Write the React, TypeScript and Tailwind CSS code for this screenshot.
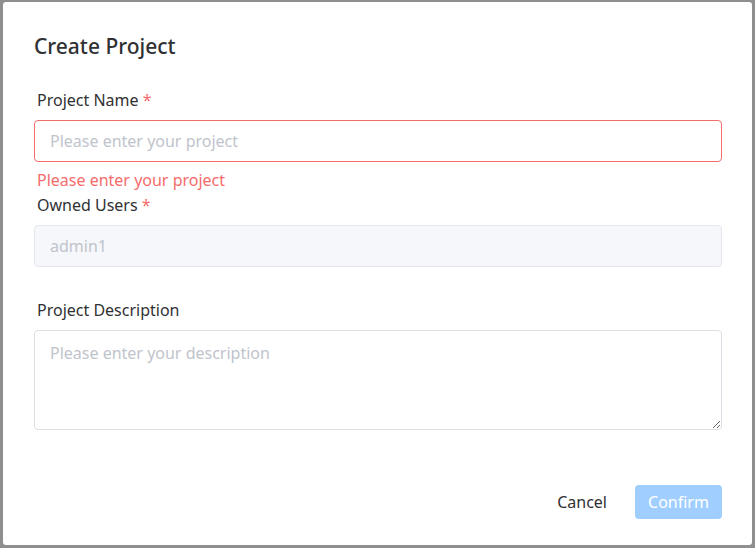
export default function App() {
  return (
    <div className="h-[548px] w-[755px] overflow-hidden bg-[#8f8f8f] pb-[3px] pl-[3px] pr-[3px] pt-[2px]">
      <div
        className="flex h-full w-full flex-col rounded-[3px] bg-white pl-[31px] pr-[30px] pt-[30px]"
        style={{ fontFamily: '"Noto Sans", "Open Sans", sans-serif' }}
      >
        {/* header */}
        <h2 className="h-[28px] text-[21px] leading-[28px] font-medium text-[#303133]">Create Project</h2>

        {/* Project Name */}
        <label className="mt-[28px] h-[24px] pl-[3px] text-[16px] leading-[24px] text-[#303133]">
          Project Name <span className="text-[#f56c6c]">*</span>
        </label>
        <input
          className="mt-[8px] h-[42px] w-full rounded-[4px] border border-[#f56c6c] px-[15px] text-[16px] text-[#606266] outline-none placeholder:text-[#c0c4cc]"
          placeholder="Please enter your project"
        />
        <div className="mt-[6px] h-[24px] pl-[3px] text-[16px] leading-[24px] text-[#f56c6c]">Please enter your project</div>

        {/* Owned Users */}
        <label className="mt-[1px] h-[24px] pl-[3px] text-[16px] leading-[24px] text-[#303133]">
          Owned Users <span className="text-[#f56c6c]">*</span>
        </label>
        <input
          className="mt-[8px] h-[42px] w-full rounded-[4px] border border-[#e4e7ed] bg-[#f5f7fa] px-[15px] text-[16px] text-[#c0c4cc] outline-none"
          value="admin1"
          disabled
          readOnly
        />

        {/* Project Description */}
        <label className="mt-[31px] h-[24px] pl-[3px] text-[16px] leading-[24px] text-[#303133]">Project Description</label>
        <textarea
          className="mt-[8px] h-[100px] w-full resize-y rounded-[4px] border border-[#dcdfe6] px-[15px] py-[10px] text-[16px] leading-[24px] text-[#606266] outline-none placeholder:text-[#c0c4cc]"
          placeholder="Please enter your description"
        />

        {/* footer */}
        <div className="mt-[55px] flex items-center justify-end">
          <button className="h-[34px] px-[15px] text-[16px] text-[#303133]">Cancel</button>
          <button className="ml-[13px] h-[34px] w-[87px] rounded-[4px] bg-[#a0cfff] text-[16px] text-white">Confirm</button>
        </div>
      </div>
    </div>
  )
}
